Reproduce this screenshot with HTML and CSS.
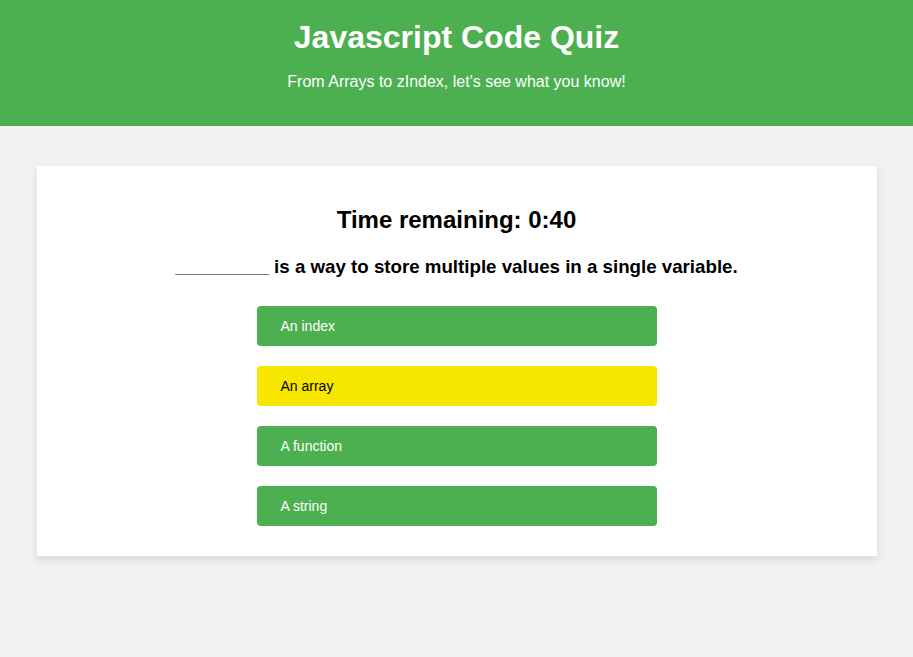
FILE: index.html
```html
<!DOCTYPE html>
<html>
<head>
<meta charset="utf-8">
<link rel="stylesheet" href="styles.css">
</head>
<body>
<header class="site-header">
  <h1 class="title">Javascript Code Quiz</h1>
  <p class="subtitle">From Arrays to zIndex, let's see what you know!</p>
</header>
<main class="main">
  <section class="card">
    <h2 class="timer">Time remaining: 0:40</h2>
    <h3 class="question">_________ is a way to store multiple values in a single variable.</h3>
    <div class="choices">
      <button class="choice">An index</button>
      <button class="choice choice-selected">An array</button>
      <button class="choice">A function</button>
      <button class="choice">A string</button>
    </div>
  </section>
</main>
</body>
</html>
```
FILE: styles.css
```css
* { box-sizing: border-box; }
html, body { margin: 0; padding: 0; }
body {
  background: #f1f1f1;
  font-family: "Liberation Sans", Arial, sans-serif;
  color: #000;
  min-height: 657px;
}
.site-header {
  background: #4caf50;
  color: #fff;
  text-align: center;
  height: 126px;
  padding-top: 19px;
}
.title {
  margin: 0;
  font-size: 32px;
  font-weight: bold;
  line-height: 37px;
}
.subtitle {
  margin: 17px 0 0;
  font-size: 16px;
  line-height: 18px;
}
.main {
  padding-top: 40px;
}
.card {
  width: 840px;
  margin: 0 auto;
  background: #fff;
  box-shadow: 0 4px 8px rgba(0,0,0,0.1);
  padding: 40px 0 30px;
  text-align: center;
}
.timer {
  margin: 0;
  font-size: 24px;
  line-height: 28px;
  font-weight: bold;
}
.question {
  margin: 22px 0 0;
  font-size: 18.72px;
  line-height: 22px;
  font-weight: bold;
}
.choices {
  margin-top: 28px;
  display: flex;
  flex-direction: column;
  align-items: center;
  gap: 20px;
}
.choice {
  width: 400px;
  height: 40px;
  border: none;
  border-radius: 4px;
  background: #4caf50;
  color: #fff;
  font-family: "Liberation Sans", Arial, sans-serif;
  font-size: 14px;
  text-align: left;
  padding: 0 24px;
}
.choice-selected {
  background: #f7e600;
  color: #000;
}
```
